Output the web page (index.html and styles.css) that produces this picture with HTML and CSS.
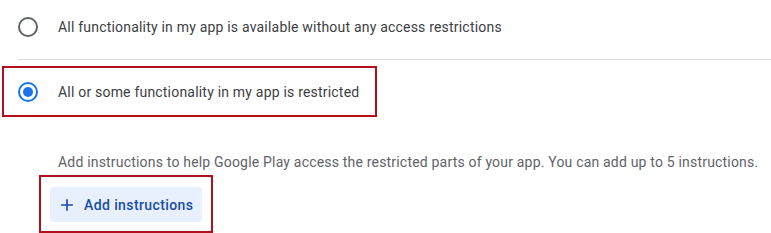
FILE: index.html
```html
<!DOCTYPE html>
<html>
<head>
<meta charset="utf-8">
<link rel="stylesheet" href="styles.css">
</head>
<body>
<div class="page">
  <div class="option first">
    <span class="radio"></span>
    <span class="label">All functionality in my app is available without any access restrictions</span>
  </div>
  <div class="divider"></div>
  <div class="option selected highlight">
    <span class="radio checked"></span>
    <span class="label">All or some functionality in my app is restricted</span>
  </div>
  <p class="help">Add instructions to help Google Play access the restricted parts of your app. You can add up to 5 instructions.</p>
  <div class="btn-wrap highlight">
    <button class="add-btn">
      <svg class="plus" viewBox="0 0 24 24" width="20" height="20"><path d="M19 13h-6v6h-2v-6H5v-2h6V5h2v6h6v2z" fill="currentColor"/></svg>
      <span>Add instructions</span>
    </button>
  </div>
</div>
</body>
</html>
```

FILE: styles.css
```css
html, body {
  margin: 0;
  padding: 0;
  background: #ffffff;
}
body {
  font-family: Roboto, "Liberation Sans", Arial, sans-serif;
  font-size: 14px;
  color: #3c4043;
  overflow: hidden;
}
.page {
  width: 771px;
  height: 233px;
  overflow: hidden;
}
.option {
  display: flex;
  align-items: center;
  box-sizing: border-box;
}
.option.first {
  padding: 17px 0 22px 18px;
}
.radio {
  width: 20px;
  height: 20px;
  box-sizing: border-box;
  border: 2px solid #5f6368;
  border-radius: 50%;
  flex: none;
  display: flex;
  align-items: center;
  justify-content: center;
}
.radio.checked {
  border-color: #1a73e8;
}
.radio.checked::after {
  content: "";
  width: 10px;
  height: 10px;
  border-radius: 50%;
  background: #1a73e8;
}
.label {
  margin-left: 20px;
  line-height: 20px;
  letter-spacing: 0.2px;
}
.divider {
  height: 1px;
  background: #dadce0;
  margin-left: 18px;
}
.highlight {
  border: 2px solid #b2101a;
  box-sizing: border-box;
}
.option.selected {
  margin: 6px 0 0 2px;
  width: 375px;
  height: 51px;
  padding-left: 14px;
}
.help {
  margin: 35px 0 0 58px;
  line-height: 20px;
  color: #5f6368;
  letter-spacing: 0.19px;
  white-space: nowrap;
}
.btn-wrap {
  margin: 3px 0 0 39px;
  width: 174px;
  height: 58px;
  padding: 10px 0 0 9px;
}
.add-btn {
  display: flex;
  align-items: center;
  width: 152px;
  height: 35px;
  box-sizing: border-box;
  padding: 0 0 0 7px;
  border: none;
  border-radius: 4px;
  background: #e8f0fe;
  color: #174ea6;
  font-family: Roboto, "Liberation Sans", Arial, sans-serif;
  font-size: 14px;
  font-weight: 500;
  letter-spacing: 0.4px;
}
.plus {
  flex: none;
  margin-right: 7px;
}
```
